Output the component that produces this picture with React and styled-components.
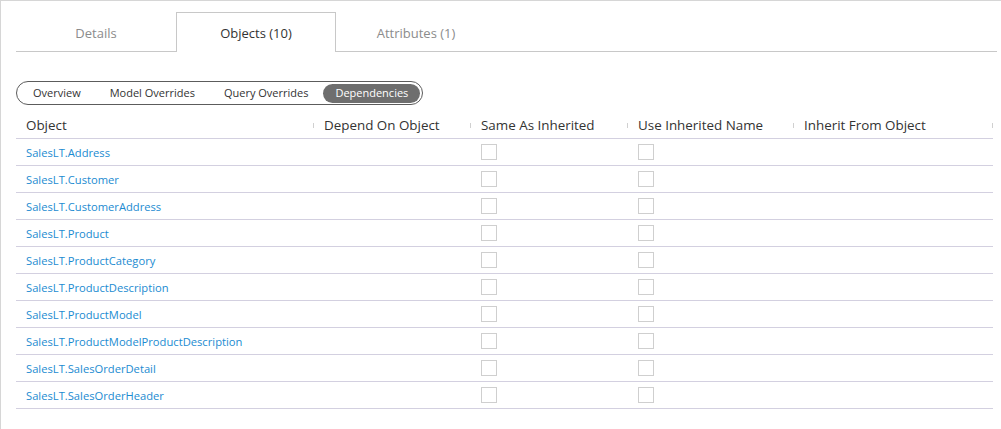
import React from "react";
import styled, { createGlobalStyle } from "styled-components";

const Global = createGlobalStyle`
  html, body { margin: 0; padding: 0; background: #fff; }
  body { font-family: "Open Sans", "Noto Sans", sans-serif; }
  * { box-sizing: border-box; }
`;

const Page = styled.div`
  height: 429px;
  border-top: 1px solid #d6d6d6;
  border-left: 1px solid #d6d6d6;
  padding: 11px 4px 0 15px;
  overflow: hidden;
`;

const TabBar = styled.div`
  display: flex;
  height: 40px;
  border-bottom: 1px solid #c8c8c8;
`;

const Tab = styled.div`
  width: 160px;
  height: 40px;
  display: flex;
  align-items: center;
  justify-content: center;
  font-size: 13px;
  color: ${p => (p.active ? "#333" : "#8c8c8c")};
  background: ${p => (p.active ? "#fff" : "transparent")};
  border: 1px solid ${p => (p.active ? "#c8c8c8" : "transparent")};
  border-bottom: none;
  margin-bottom: -1px;
  padding-top: 1px;
`;

const Pill = styled.div`
  display: inline-flex;
  align-items: center;
  gap: 1px;
  margin-top: 29px;
  height: 24px;
  padding: 0 2px;
  border: 1px solid #5c5c5c;
  border-radius: 12px;
`;

const PillItem = styled.div`
  height: 19px;
  display: flex;
  align-items: center;
  padding: 0 ${p => (p.active ? 12 : 14)}px 1px;
  border-radius: 10px;
  font-size: 11px;
  color: ${p => (p.active ? "#fff" : "#333")};
  background: ${p => (p.active ? "#6e6e6e" : "transparent")};
`;

const Grid = styled.div`
  display: grid;
  grid-template-columns: 298px 157px 157px 166px 199px;
  margin-top: 8px;
`;

const HeadCell = styled.div`
  position: relative;
  height: 26px;
  display: flex;
  align-items: center;
  padding: 0 10px 1px;
  font-size: 13.4px;
  color: #333;
  border-bottom: 1px solid #d3d0e0;
  &::after {
    content: "";
    position: absolute;
    right: 0;
    top: 10px;
    width: 1px;
    height: 5px;
    background: #d0d0d0;
  }
`;

const Cell = styled.div`
  height: 27px;
  display: flex;
  align-items: center;
  padding: 0 10px 0;
  font-size: 11.2px;
  color: #1b8bd1;
  border-bottom: 1px solid #d3d0e0;
`;

const Box = styled.span`
  width: 16px;
  height: 16px;
  border: 1px solid #cfcfcf;
  background: #fff;
`;

const tabs = ["Details", "Objects (10)", "Attributes (1)"];
const views = ["Overview", "Model Overrides", "Query Overrides", "Dependencies"];
const columns = ["Object", "Depend On Object", "Same As Inherited", "Use Inherited Name", "Inherit From Object"];
const objects = [
  "SalesLT.Address",
  "SalesLT.Customer",
  "SalesLT.CustomerAddress",
  "SalesLT.Product",
  "SalesLT.ProductCategory",
  "SalesLT.ProductDescription",
  "SalesLT.ProductModel",
  "SalesLT.ProductModelProductDescription",
  "SalesLT.SalesOrderDetail",
  "SalesLT.SalesOrderHeader",
];

export default function App() {
  return (
    <Page>
      <Global />
      <TabBar>
        {tabs.map(t => (
          <Tab key={t} active={t === "Objects (10)"}>{t}</Tab>
        ))}
      </TabBar>
      <Pill>
        {views.map(v => (
          <PillItem key={v} active={v === "Dependencies"}>{v}</PillItem>
        ))}
      </Pill>
      <Grid>
        {columns.map(c => (
          <HeadCell key={c}>{c}</HeadCell>
        ))}
        {objects.map(o => (
          <React.Fragment key={o}>
            <Cell>{o}</Cell>
            <Cell />
            <Cell><Box /></Cell>
            <Cell><Box /></Cell>
            <Cell />
          </React.Fragment>
        ))}
      </Grid>
    </Page>
  );
}
